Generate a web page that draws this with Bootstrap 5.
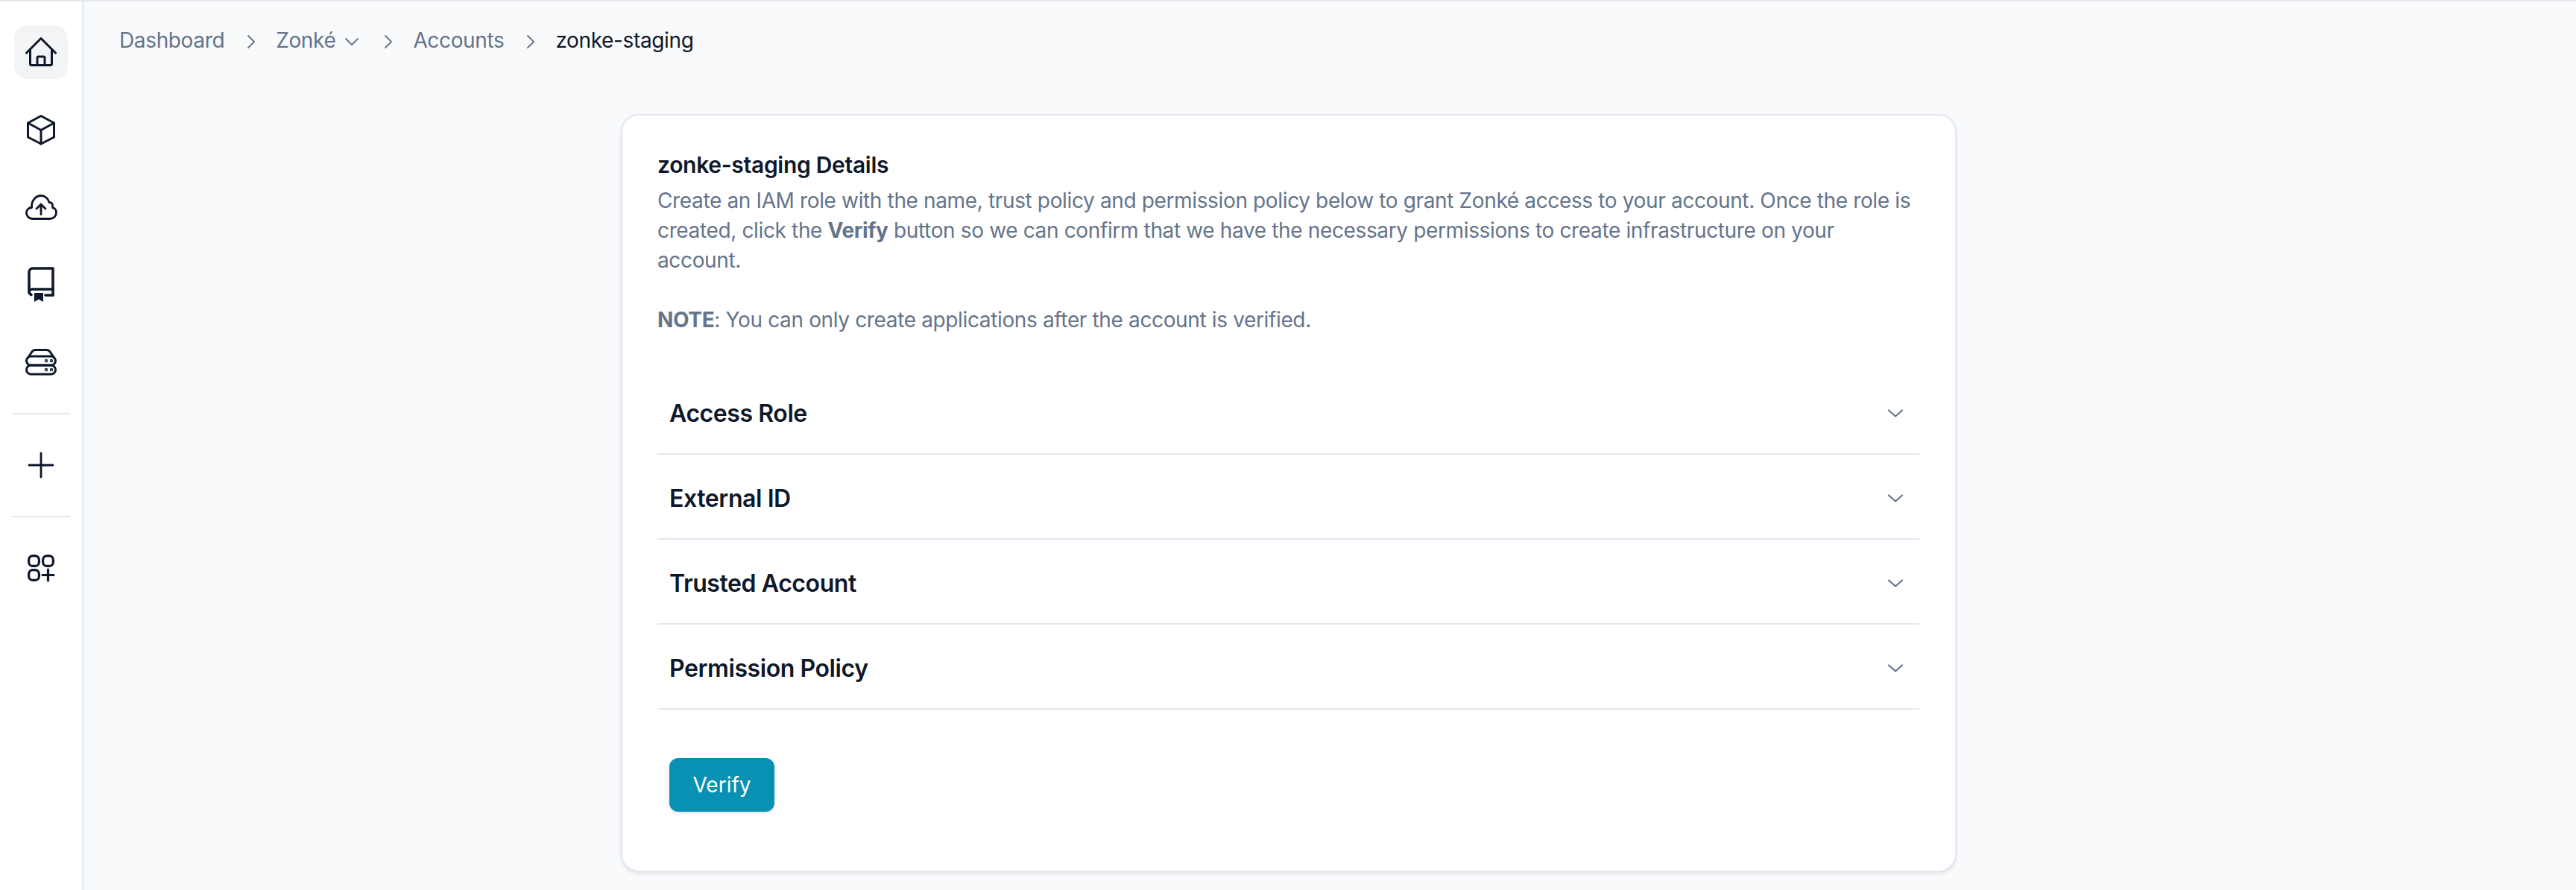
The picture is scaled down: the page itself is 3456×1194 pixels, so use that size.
<!doctype html>
<html lang="en">
<head>
<meta charset="utf-8">
<title>zonke-staging</title>
<link href="https://cdn.jsdelivr.net/npm/bootstrap@5.3.0/dist/css/bootstrap.min.css" rel="stylesheet">
<style>
html,body{height:100%}
body{font-family:Inter,"Liberation Sans",sans-serif;background:#f9fafb;color:#0f172a;overflow:hidden;font-size:28px;line-height:40px;letter-spacing:-.36px}
.shell{height:1194px;border-top:2px solid #e5e7eb}
.side{width:112px;flex:none;background:#fff;border-right:2px solid #e2e8f0;padding-top:32px}
.side-btn{width:72px;height:72px;border-radius:18px;color:#0f172a}
.side-btn.on{background:#f3f4f6}
.side-gap{margin-bottom:32px}
.side-rule{width:78px;height:2px;background:#e5e7eb;margin:0 0 32px;border:0;opacity:1}
.crumbs{padding:32px 0 0 48px;height:72px;margin:0 0 79px;color:#64748b;list-style:none;gap:0}
.crumbs a{color:#64748b;text-decoration:none}
.crumb-sep{margin:0 27px 0 30px;color:#64748b}
.crumb-now{color:#0f172a}
.crumb-down{margin:0 3px 0 12px;color:#64748b}
.panel{width:1792px;height:1017px;margin-left:721px;background:#fff;border:2px solid #e2e8f0;border-radius:24px;box-shadow:0 2px 4px rgba(15,23,42,.1);padding:48px 48px 0 47px}
.panel-title{font-size:30px;line-height:36px;font-weight:600;margin:0 0 10px;color:#0f172a;letter-spacing:-.3px}
.panel-text{color:#64748b;margin:0}
.panel-text b{font-weight:700}
.fold{--bs-accordion-border-color:#e2e8f0;--bs-accordion-border-width:2px;--bs-accordion-btn-icon-width:28px;--bs-accordion-btn-icon:url("data:image/svg+xml,%3Csvg xmlns='http://www.w3.org/2000/svg' viewBox='0 0 28 28' fill='none' stroke='%2364748b' stroke-width='2.2' stroke-linecap='round' stroke-linejoin='round'%3E%3Cpath d='M5 9.500l9 8 9-8'/%3E%3C/svg%3E");margin-top:47px}
.fold .accordion-item{height:114px;border-bottom:2px solid #e2e8f0!important}
.fold .accordion-button{height:112px;padding:6px 18px 0 16px;font-size:32px;font-weight:600;letter-spacing:-.42px;color:#0f172a;background:#fff;box-shadow:none}
.verify{background:#0891b2;border:0;color:#fff;width:141px;height:72px;border-radius:12px;font-size:28px;font-weight:400;letter-spacing:0;margin:65px 0 0 16px;box-shadow:0 2px 4px rgba(15,23,42,.12);padding:0}
</style>
</head>
<body>
<div class="shell d-flex">
  <nav class="side d-flex flex-column align-items-center">
    <a class="side-btn on side-gap d-flex align-items-center justify-content-center" href="#" aria-label="Home">
      <svg width="44" height="44" viewBox="0 0 44 44" fill="none" stroke="currentColor" stroke-width="3" stroke-linecap="round" stroke-linejoin="round"><path d="M2.500 23 22 3.500 41.500 23"/><path d="M7.500 19v18.500a2 2 0 0 0 2 2h25a2 2 0 0 0 2-2V19"/><path d="M17 39.500V29.500a1.500 1.500 0 0 1 1.500-1.500h7a1.500 1.500 0 0 1 1.500 1.500v10"/></svg>
    </a>
    <a class="side-btn side-gap d-flex align-items-center justify-content-center" href="#" aria-label="Packages">
      <svg width="44" height="44" viewBox="0 0 44 44" fill="none" stroke="currentColor" stroke-width="3" stroke-linejoin="round" stroke-linecap="round"><path d="M22 3.500 39.500 13v19L22 41 4.500 32V13z"/><path d="M4.500 13 22 22.500 39.500 13"/><path d="M22 22.500V41"/></svg>
    </a>
    <a class="side-btn side-gap d-flex align-items-center justify-content-center" href="#" aria-label="Deploy">
      <svg width="44" height="44" viewBox="0 0 44 44" fill="none" stroke="currentColor" stroke-width="2.800" stroke-linecap="round" stroke-linejoin="round"><path d="M11 37.500C5.500 37.500 2.500 33.500 2.500 29.500 2.500 25.500 5.500 22.500 9.500 22.500 9 13 15 6.500 22 6.500c5.500 0 9.500 4 11 9 4 0 5 3 4.500 7 3 .5 5 3.500 5 7C42.500 33.500 39 37.500 34 37.500z"/><path d="M22 31.500V18M16 24l6-6 6 6"/></svg>
    </a>
    <a class="side-btn side-gap d-flex align-items-center justify-content-center" href="#" aria-label="Docs">
      <svg width="44" height="48" viewBox="0 0 44 48" fill="none" stroke="currentColor" stroke-width="3.600" stroke-linecap="round" stroke-linejoin="round"><path d="M38 38V2H11a5 5 0 0 0-5 5v26a5 5 0 0 0 3 4.500"/><path d="M6 34a4 4 0 0 1 4-4h28"/><path d="M28 38h10"/><path d="M13 35h12v12l-6-3.500-6 3.500z" fill="currentColor" stroke="none"/></svg>
    </a>
    <a class="side-btn side-gap d-flex align-items-center justify-content-center" href="#" aria-label="Storage">
      <svg width="44" height="38" viewBox="0 0 44 38" fill="none" stroke="currentColor" stroke-width="3" stroke-linecap="round" stroke-linejoin="round"><rect x="2.500" y="11" width="39" height="12" rx="6"/><rect x="2.500" y="23" width="39" height="12" rx="6"/><path d="M4.500 13 9.500 5.500A6 6 0 0 1 14.500 2.500h15a6 6 0 0 1 5 3L39.500 13"/><circle cx="29" cy="17" r=".7"/><circle cx="36" cy="17" r=".7"/><circle cx="29" cy="29" r=".7"/><circle cx="36" cy="29" r=".7"/></svg>
    </a>
    <hr class="side-rule">
    <a class="side-btn side-gap d-flex align-items-center justify-content-center" href="#" aria-label="Add">
      <svg width="36" height="36" viewBox="0 0 36 36" fill="none" stroke="currentColor" stroke-width="2.800" stroke-linecap="round"><path d="M18 2v32M2 18h32"/></svg>
    </a>
    <hr class="side-rule">
    <a class="side-btn d-flex align-items-center justify-content-center" href="#" aria-label="Apps">
      <svg width="38" height="38" viewBox="0 0 38 38" fill="none" stroke="currentColor" stroke-width="3.200" stroke-linecap="round"><rect x="2.600" y="2.600" width="13.800" height="13.800" rx="5.500"/><rect x="21.600" y="2.600" width="13.800" height="13.800" rx="5.500"/><rect x="2.600" y="21.600" width="13.800" height="13.800" rx="5.500"/><path d="M28.500 21v15M21 28.500h15"/></svg>
    </a>
  </nav>
  <main class="flex-grow-1">
    <ol class="crumbs d-flex align-items-start">
      <li><a href="#">Dashboard</a></li>
      <li class="crumb-sep"><svg width="12" height="20" viewBox="0 0 12 20" fill="none" stroke="currentColor" stroke-width="1.800" stroke-linecap="round" stroke-linejoin="round"><path d="M2 2l8 8-8 8"/></svg></li>
      <li><a href="#">Zonké<svg class="crumb-down" width="20" height="12" viewBox="0 0 20 12" fill="none" stroke="currentColor" stroke-width="1.800" stroke-linecap="round" stroke-linejoin="round"><path d="M2 2l8 8 8-8"/></svg></a></li>
      <li class="crumb-sep"><svg width="12" height="20" viewBox="0 0 12 20" fill="none" stroke="currentColor" stroke-width="1.800" stroke-linecap="round" stroke-linejoin="round"><path d="M2 2l8 8-8 8"/></svg></li>
      <li><a href="#">Accounts</a></li>
      <li class="crumb-sep"><svg width="12" height="20" viewBox="0 0 12 20" fill="none" stroke="currentColor" stroke-width="1.800" stroke-linecap="round" stroke-linejoin="round"><path d="M2 2l8 8-8 8"/></svg></li>
      <li class="crumb-now">zonke-staging</li>
    </ol>
    <section class="panel">
      <h1 class="panel-title">zonke-staging Details</h1>
      <p class="panel-text">Create an IAM role with the name, trust policy and permission policy below to grant Zonké access to your account. Once the role is created, click the <b>Verify</b> button so we can confirm that we have the necessary permissions to create infrastructure on your account.<br><br><b>NOTE</b>: You can only create applications after the account is verified.</p>
      <div class="accordion accordion-flush fold">
        <div class="accordion-item"><h2 class="accordion-header"><button class="accordion-button collapsed" type="button">Access Role</button></h2></div>
        <div class="accordion-item"><h2 class="accordion-header"><button class="accordion-button collapsed" type="button">External ID</button></h2></div>
        <div class="accordion-item"><h2 class="accordion-header"><button class="accordion-button collapsed" type="button">Trusted Account</button></h2></div>
        <div class="accordion-item"><h2 class="accordion-header"><button class="accordion-button collapsed" type="button">Permission Policy</button></h2></div>
      </div>
      <button class="btn verify" type="button">Verify</button>
    </section>
  </main>
</div>
<script src="https://cdn.jsdelivr.net/npm/bootstrap@5.3.0/dist/js/bootstrap.bundle.min.js"></script>
</body>
</html>
